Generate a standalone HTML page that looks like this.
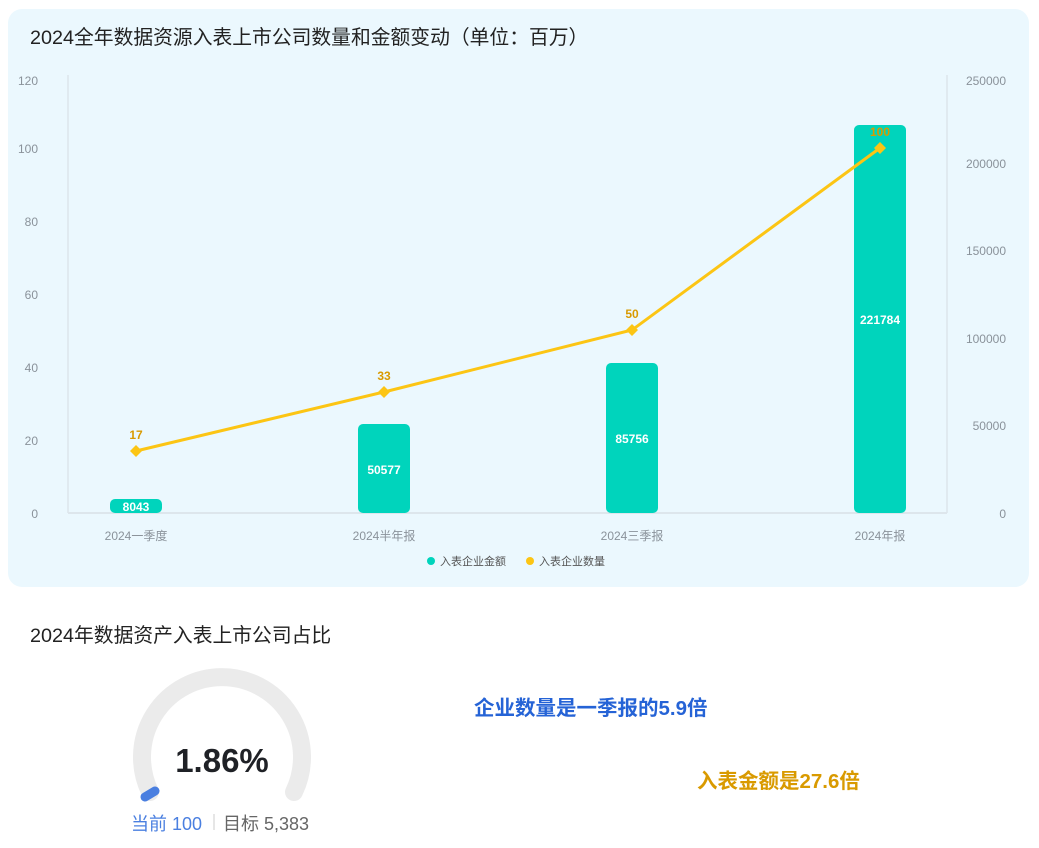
<!DOCTYPE html>
<html><head><meta charset="utf-8"><style>
body{margin:0;width:1039px;height:848px;background:#fff;font-family:"Liberation Sans","Noto Sans CJK SC",sans-serif;position:relative;overflow:hidden}
.card{position:absolute;left:8px;top:9px;width:1021px;height:578px;background:#ebf8fe;border-radius:14px}
.t{position:absolute;font-size:19.8px;color:#222}
</style></head><body>
<div class="card"></div>
<div class="t" style="left:30px;top:21px">2024全年数据资源入表上市公司数量和金额变动（单位：百万）</div>
<svg style="position:absolute;left:0;top:0" width="1039" height="848" font-family="Liberation Sans,Noto Sans CJK SC,sans-serif">
<line x1="68" y1="75" x2="68" y2="513" stroke="#dde6ec" stroke-width="1.5"/>
<line x1="947" y1="75" x2="947" y2="513" stroke="#dde6ec" stroke-width="1.5"/>
<line x1="68" y1="513" x2="947" y2="513" stroke="#dde6ec" stroke-width="2"/>
<g font-size="12" fill="#8a929a" text-anchor="end">
<text x="38" y="85">120</text><text x="38" y="153">100</text><text x="38" y="226">80</text><text x="38" y="299">60</text><text x="38" y="372">40</text><text x="38" y="445">20</text><text x="38" y="518">0</text>
</g>
<g font-size="12" fill="#8a929a" text-anchor="end">
<text x="1006" y="85">250000</text><text x="1006" y="168">200000</text><text x="1006" y="255">150000</text><text x="1006" y="343">100000</text><text x="1006" y="430">50000</text><text x="1006" y="518">0</text>
</g>
<g font-size="12" fill="#8a929a" text-anchor="middle">
<text x="136" y="540">2024一季度</text><text x="384" y="540">2024半年报</text><text x="632" y="540">2024三季报</text><text x="880" y="540">2024年报</text>
</g>
<g fill="#00d4bc">
<rect x="110" y="499" width="52" height="14" rx="5"/>
<rect x="358" y="424" width="52" height="89" rx="5"/>
<rect x="606" y="363" width="52" height="150" rx="5"/>
<rect x="854" y="125" width="52" height="388" rx="5"/>
</g>
<g font-size="12" font-weight="bold" fill="#fff" text-anchor="middle">
<text x="136" y="511">8043</text><text x="384" y="474">50577</text><text x="632" y="443">85756</text><text x="880" y="324">221784</text>
</g>
<polyline points="136,451 384,392 632,330 880,148" fill="none" stroke="#fcc514" stroke-width="3"/>
<g fill="#fcc514">
<path d="M136 445 L142 451 L136 457 L130 451Z"/><path d="M384 386 L390 392 L384 398 L378 392Z"/><path d="M632 324 L638 330 L632 336 L626 330Z"/><path d="M880 142 L886 148 L880 154 L874 148Z"/>
</g>
<g font-size="12" font-weight="bold" fill="#d99a00" text-anchor="middle">
<text x="136" y="439">17</text><text x="384" y="380">33</text><text x="632" y="318">50</text><text x="880" y="136">100</text>
</g>
<circle cx="431" cy="561" r="4" fill="#00d4bc"/><text x="440" y="565" font-size="11" fill="#555">入表企业金额</text>
<circle cx="530" cy="561" r="4" fill="#fcc514"/><text x="539" y="565" font-size="11" fill="#555">入表企业数量</text>
<path d="M150 792 A80 80 0 1 1 294 792" fill="none" stroke="#ebebeb" stroke-width="18" stroke-linecap="round"/>
<path d="M145 797 L155 791" stroke="#4a7fe0" stroke-width="9" stroke-linecap="round"/>
<text x="222" y="772" font-size="33" font-weight="bold" fill="#1f2126" text-anchor="middle">1.86%</text>
<text x="131" y="830" font-size="18" fill="#4a7fe0">当前 100</text>
<line x1="214" y1="814" x2="214" y2="830" stroke="#ccc"/>
<text x="223" y="830" font-size="18" fill="#666">目标 5,383</text>
<text x="474" y="715" font-size="20.5" font-weight="bold" fill="#2563d6">企业数量是一季报的5.9倍</text>
<text x="697" y="788" font-size="20.5" font-weight="bold" fill="#d99a00">入表金额是27.6倍</text>
</svg>
<div class="t" style="left:30px;top:619px;font-size:19.8px">2024年数据资产入表上市公司占比</div>
</body></html>
